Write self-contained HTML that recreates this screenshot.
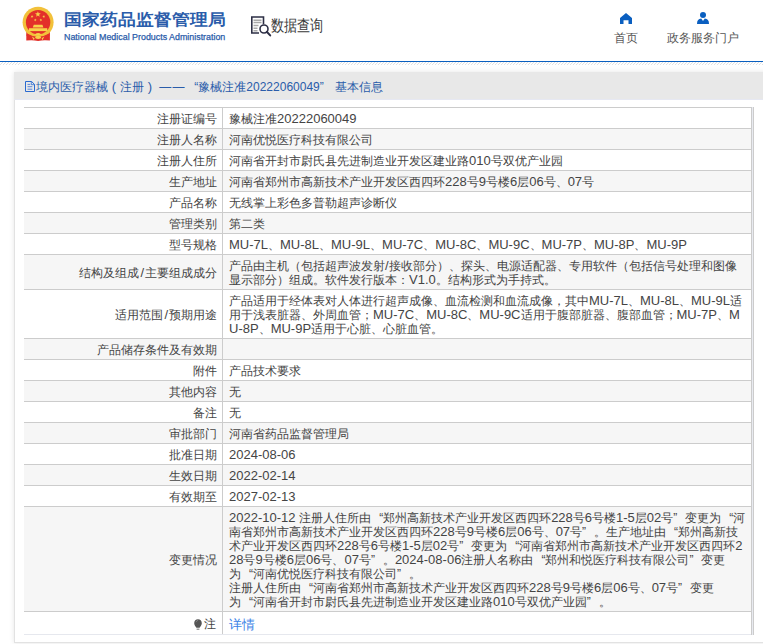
<!DOCTYPE html>
<html><head><meta charset="utf-8">
<style>
*{margin:0;padding:0;box-sizing:border-box}
html,body{width:763px;height:644px;overflow:hidden;background:#fff;font-family:"Liberation Sans",sans-serif;color:#333}
.hdr{position:absolute;left:0;top:0;width:763px;height:61px;background:#fff}
.emb{position:absolute;left:22px;top:6px;width:33px;height:36px}
.t1{position:absolute;left:64px;top:7px;font-size:18px;line-height:22px;font-weight:bold;color:#2a5caa;white-space:nowrap;transform:scaleY(0.9);transform-origin:0 100%}
.t2{position:absolute;left:64px;top:31px;font-size:8.9px;line-height:12px;color:#2a5caa;white-space:nowrap;-webkit-text-stroke:0.25px #2a5caa}
.sq{position:absolute;left:251px;top:16px}
.sqt{position:absolute;left:271px;top:15.5px;font-size:16px;line-height:20px;color:#3a3a3a;white-space:nowrap;transform:scaleX(0.82);transform-origin:0 0}
.nav{position:absolute;top:12px;text-align:center;font-size:12px;line-height:14px;color:#555;white-space:nowrap}
.line{position:absolute;left:0;top:61px;width:763px;height:1px;background:#0a5fc0}
.hatch{position:absolute;left:0;top:62px;width:763px;height:3px}
.panel{position:absolute;left:14px;top:72px;width:760px;height:571px;background:#fff;border:1px solid #e2e2e2;box-shadow:0 0 5px rgba(0,0,0,.1)}
.bar{position:absolute;left:-1px;top:-1px;width:762px;height:28px;background:#e8e8e8;border-bottom:1px solid #e6e8f2;font-size:12px;color:#2a5caa;line-height:29px;padding-left:11px;white-space:nowrap}
.bar .l{font-size:12px}
.bar .fl,.bar .fr{display:inline-block;width:12px}
.bar .fl{text-align:right;width:13px}.bar .pc{display:inline-block;width:12px;text-align:center;font-size:13px}.bar .dd{display:inline-block;width:26px;letter-spacing:1.2px}.bar .fr{text-align:left}
table{position:absolute;left:9px;top:34px;border-collapse:collapse;width:728px;font-size:12px;color:#444}
td{border:1px solid #ccc;padding:4px 3px 2px 6px;line-height:14px;vertical-align:middle;white-space:nowrap}
td.k{text-align:right;width:198px;padding-right:5px}
tr:nth-child(even) td{background:#f6f6f6}
td.k{border-left-color:#fff}tr:nth-child(even) td.k{border-left-color:#f6f6f6}
.l{font-size:13px;line-height:14px}
.sl{font-size:13px;line-height:14px;padding:0 1px}
.ql,.qr{display:inline-block;width:12px;line-height:14px}
.ql{text-align:right}.qr{text-align:left}
tr.last td{height:23px;border-bottom-color:#e6e8ee;padding-top:3px;padding-bottom:1px}
tr.last td.k{border-left-color:#fff;padding-right:6px}
.pin{display:inline-block;width:8px;height:11px;vertical-align:-2px;margin-right:2px}
a{color:#3b82e6;text-decoration:none;font-size:13px;position:relative;top:1px}
.rb{position:absolute;left:751px;top:107px;width:3px;height:528px;border-left:1px solid #ccc;border-right:1px solid #ccc;background:#e8eaf0}
</style></head><body>
<div class="hdr">
  <svg class="emb" viewBox="0 0 33 36">
    <path d="M4.3 25 L27.9 25 L27.9 34.6 Q22 33.5 16.1 35 Q10.2 33.5 4.3 34.6Z" fill="#e3302a"/>
    <circle cx="16.1" cy="16.2" r="15.5" fill="#f2c13a"/>
    <circle cx="16.1" cy="16.2" r="12.2" fill="#e3302a"/>
    <polygon points="15.90,5.30 16.64,7.28 18.75,7.37 17.10,8.69 17.66,10.73 15.90,9.56 14.14,10.73 14.70,8.69 13.05,7.37 15.16,7.28" fill="#f7d24a"/>
    <polygon points="10.75,9.30 10.58,10.34 11.47,10.91 10.42,11.07 10.16,12.09 9.69,11.15 8.63,11.21 9.38,10.47 9.00,9.49 9.93,9.97" fill="#f7d24a"/>
    <polygon points="21.05,9.30 21.87,9.97 22.80,9.49 22.42,10.47 23.17,11.21 22.12,11.15 21.64,12.09 21.38,11.07 20.33,10.91 21.22,10.34" fill="#f7d24a"/>
    <polygon points="13.69,12.55 13.79,13.60 14.80,13.92 13.83,14.34 13.84,15.40 13.14,14.61 12.13,14.94 12.67,14.03 12.04,13.18 13.07,13.41" fill="#f7d24a"/>
    <polygon points="18.51,12.55 19.13,13.41 20.16,13.18 19.53,14.03 20.07,14.94 19.06,14.61 18.36,15.40 18.37,14.34 17.40,13.92 18.41,13.60" fill="#f7d24a"/>
    <path d="M10.8 21.5 L11.8 18.8 H20.4 L21.4 21.5Z" fill="#f7d24a"/>
    <rect x="7" y="22.2" width="18.2" height="2.9" fill="#f7d24a"/>
    <path d="M5 27.5 Q16.1 34 27.2 27.5 L27.9 29.5 Q16.1 36 4.3 29.5Z" fill="#e3302a"/>
    <path d="M12.8 28.5 Q16.1 25.6 19.4 28.5 Q16.1 30 12.8 28.5Z" fill="#f7d24a"/>
    <ellipse cx="16.1" cy="31.3" rx="3" ry="1.6" fill="#f7d24a"/>
    <path d="M9.8 30.6 L12.6 32.2 L11.8 34.3Z M22.4 30.6 L19.6 32.2 L20.4 34.3Z" fill="#f7d24a"/>
  </svg>
  <div class="t1">国家药品监督管理局</div>
  <div class="t2">National Medical Products Administration</div>
  <svg class="sq" width="21" height="21" viewBox="0 0 21 21">
    <path d="M12.5 8.3V1H0.8V17H8" fill="none" stroke="#2d2f45" stroke-width="1.6"/>
    <path d="M2.5 4.3h8M2.5 6.6h8M2.5 9.4h5M2.5 12.2h4M2.5 14.8h4" stroke="#a8a8a8" stroke-width="1.5"/>
    <circle cx="13" cy="13" r="4" fill="#fff" stroke="#2d2f45" stroke-width="1.6"/>
    <path d="M15.8 15.8L19.2 19.4" stroke="#2d2f45" stroke-width="2" stroke-linecap="round"/>
  </svg>
  <div class="sqt">数据查询</div>
  <svg style="position:absolute;left:620px;top:13px" width="12" height="11" viewBox="0 0 12 11"><path d="M6 0L12 5V11H8.5V7.2H3.5V11H0V5Z" fill="#0a5fc0"/></svg>
  <div class="nav" style="left:613px;top:31px;width:26px">首页</div>
  <svg style="position:absolute;left:697px;top:12px" width="12" height="12" viewBox="0 0 12 12"><circle cx="6" cy="3" r="3" fill="#0a5fc0"/><path d="M0 12Q0 6.8 4.2 6.6L6 9L7.8 6.6Q12 6.8 12 12Z" fill="#0a5fc0"/></svg>
  <div class="nav" style="left:665px;top:31px;width:75px">政务服务门户</div>
</div>
<div class="line"></div>
<svg class="hatch" width="763" height="3"><defs><pattern id="hp" width="3" height="3" patternUnits="userSpaceOnUse"><path d="M0 3L3 0M-1 1L1 -1M2 4L4 2" stroke="#d6d6d6" stroke-width="0.7"/></pattern></defs><rect width="763" height="3" fill="url(#hp)"/></svg>
<div class="panel">
  <div class="bar"><svg width="10" height="11" viewBox="0 0 10 11" style="vertical-align:-1px;margin-right:1px"><path d="M0.5 0.5H6.6L9.5 3.4V10.5H0.5Z" fill="none" stroke="#2a6ad0" stroke-width="1"/><path d="M6.3 0.5V3.7H9.5" fill="none" stroke="#2a6ad0" stroke-width="0.8"/><path d="M2.5 3.4H5.2M2.5 5.7H7.3M2.5 8.2H7.3" stroke="#4a7ad8" stroke-width="0.9"/></svg>境内医疗器械<span class="pc">(</span>注册<span class="pc">)</span> <span class="dd">——</span><span class="fl">“</span>豫械注准<span class="l">20222060049</span><span class="fr">”</span> 基本信息</div>
  <table>
<tr><td class="k">注册证编号</td><td class="v">豫械注准<span class="l">20222060049</span></td></tr>
<tr><td class="k">注册人名称</td><td class="v">河南优悦医疗科技有限公司</td></tr>
<tr><td class="k">注册人住所</td><td class="v">河南省开封市尉氏县先进制造业开发区建业路<span class="l">010</span>号双优产业园</td></tr>
<tr><td class="k">生产地址</td><td class="v">河南省郑州市高新技术产业开发区西四环<span class="l">228</span>号<span class="l">9</span>号楼<span class="l">6</span>层<span class="l">06</span>号、<span class="l">07</span>号</td></tr>
<tr><td class="k">产品名称</td><td class="v">无线掌上彩色多普勒超声诊断仪</td></tr>
<tr><td class="k">管理类别</td><td class="v">第二类</td></tr>
<tr><td class="k">型号规格</td><td class="v"><span class="l">MU-7L</span>、<span class="l">MU-8L</span>、<span class="l">MU-9L</span>、<span class="l">MU-7C</span>、<span class="l">MU-8C</span>、<span class="l">MU-9C</span>、<span class="l">MU-7P</span>、<span class="l">MU-8P</span>、<span class="l">MU-9P</span></td></tr>
<tr><td class="k">结构及组成<span class="sl">/</span>主要组成成分</td><td class="v">产品由主机（包括超声波发射<span class="l">/</span>接收部分）、探头、电源适配器、专用软件（包括信号处理和图像<br>显示部分）组成。软件发行版本：<span class="l">V1.0</span>。结构形式为手持式。</td></tr>
<tr><td class="k">适用范围<span class="sl">/</span>预期用途</td><td class="v">产品适用于经体表对人体进行超声成像、血流检测和血流成像，其中<span class="l">MU-7L</span>、<span class="l">MU-8L</span>、<span class="l">MU-9L</span>适<br>用于浅表脏器、外周血管；<span class="l">MU-7C</span>、<span class="l">MU-8C</span>、<span class="l">MU-9C</span>适用于腹部脏器、腹部血管；<span class="l">MU-7P</span>、<span class="l">M</span><br><span class="l">U-8P</span>、<span class="l">MU-9P</span>适用于心脏、心脏血管。</td></tr>
<tr><td class="k">产品储存条件及有效期</td><td class="v"></td></tr>
<tr><td class="k">附件</td><td class="v">产品技术要求</td></tr>
<tr><td class="k">其他内容</td><td class="v">无</td></tr>
<tr><td class="k">备注</td><td class="v">无</td></tr>
<tr><td class="k">审批部门</td><td class="v">河南省药品监督管理局</td></tr>
<tr><td class="k">批准日期</td><td class="v"><span class="l">2024-08-06</span></td></tr>
<tr><td class="k">生效日期</td><td class="v"><span class="l">2022-02-14</span></td></tr>
<tr><td class="k">有效期至</td><td class="v"><span class="l">2027-02-13</span></td></tr>
<tr><td class="k">变更情况</td><td class="v"><span class="l">2022-10-12 </span>注册人住所由<span class="ql">“</span>郑州高新技术产业开发区西四环<span class="l">228</span>号<span class="l">6</span>号楼<span class="l">1-5</span>层<span class="l">02</span>号<span class="qr">”</span>变更为<span class="ql">“</span>河<br>南省郑州市高新技术产业开发区西四环<span class="l">228</span>号<span class="l">9</span>号楼<span class="l">6</span>层<span class="l">06</span>号、<span class="l">07</span>号<span class="qr">”</span>。生产地址由<span class="ql">“</span>郑州高新技<br>术产业开发区西四环<span class="l">228</span>号<span class="l">6</span>号楼<span class="l">1-5</span>层<span class="l">02</span>号<span class="qr">”</span>变更为<span class="ql">“</span>河南省郑州市高新技术产业开发区西四环<span class="l">2</span><br><span class="l">28</span>号<span class="l">9</span>号楼<span class="l">6</span>层<span class="l">06</span>号、<span class="l">07</span>号<span class="qr">”</span>。<span class="l">2024-08-06</span>注册人名称由<span class="ql">“</span>郑州和悦医疗科技有限公司<span class="qr">”</span>变更<br>为<span class="ql">“</span>河南优悦医疗科技有限公司<span class="qr">”</span>。<br>注册人住所由<span class="ql">“</span>河南省郑州市高新技术产业开发区西四环<span class="l">228</span>号<span class="l">9</span>号楼<span class="l">6</span>层<span class="l">06</span>号、<span class="l">07</span>号<span class="qr">”</span>变更<br>为<span class="ql">“</span>河南省开封市尉氏县先进制造业开发区建业路<span class="l">010</span>号双优产业园<span class="qr">”</span>。</td></tr>
<tr class="last"><td class="k"><svg class="pin" viewBox="0 0 8 11"><path d="M4 0.3C6.2 0.3 7.8 1.9 7.8 4.2C7.8 6.2 6.4 7.4 5.6 8.8H2.4C1.6 7.4 0.2 6.2 0.2 4.2C0.2 1.9 1.8 0.3 4 0.3Z" fill="#555"/><path d="M2 3.2Q2.5 1.6 4 1.3" fill="none" stroke="#999" stroke-width="0.6"/><rect x="2.6" y="9.6" width="2.8" height="1.2" fill="#888"/></svg>注</td><td class="v"><a>详情</a></td></tr>
  </table>
</div>
<div class="rb"></div>
</body></html>
